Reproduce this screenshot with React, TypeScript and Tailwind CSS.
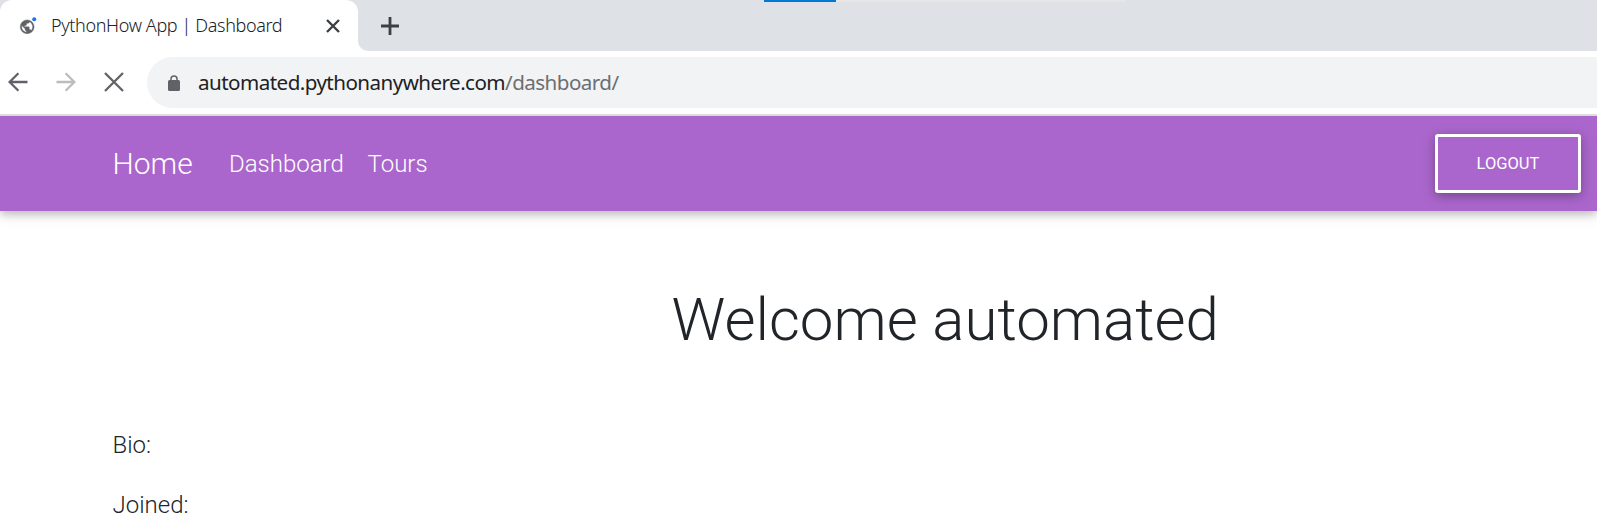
const Globe = () => (
  <svg width="20" height="20" viewBox="0 0 20 20" className="-mt-[2px] block">
    <path
      transform="translate(-0.1 3.5) scale(0.69)"
      fill="#5f6368"
      stroke="#5f6368"
      strokeWidth="0.6"
      d="M12 2C6.480 2 2 6.480 2 12s4.480 10 10 10 10-4.480 10-10S17.520 2 12 2zm-1 17.930c-3.950-.490-7-3.850-7-7.930 0-.620.080-1.210.210-1.790L9 15v1c0 1.100.900 2 2 2v1.930zm6.900-2.540c-.260-.810-1-1.390-1.900-1.390h-1v-3c0-.550-.450-1-1-1H8v-2h2c.550 0 1-.450 1-1V7h2c1.100 0 2-.900 2-2v-.410c2.930 1.190 5 4.060 5 7.410 0 2.080-.800 3.970-2.100 5.390z"
    />
    <circle cx="15.2" cy="4.2" r="2" fill="#1a73e8" />
  </svg>
);

const Cross = ({ size, width, color }: { size: number; width: number; color: string }) => (
  <svg width={size} height={size} viewBox={`0 0 ${size} ${size}`} className="block">
    <path d={`M1 1L${size - 1} ${size - 1}M${size - 1} 1L1 ${size - 1}`} stroke={color} strokeWidth={width} />
  </svg>
);

const Arrow = ({ forward = false }: { forward?: boolean }) => (
  <svg width="20" height="20" viewBox="0 0 20 20" className={forward ? "block rotate-180" : "block"}>
    <path d="M19.5 10H2M10.4 1.2L1.6 10l8.8 8.8" fill="none" stroke={forward ? "#babcbe" : "#5f6368"} strokeWidth="2.3" />
  </svg>
);

const Lock = () => (
  <svg width="12" height="16" viewBox="0 0 12 16" className="block">
    <path d="M3 6V4a3 3 0 0 1 6 0v2" fill="none" stroke="#5f6368" strokeWidth="1.5" />
    <rect y="5" width="12" height="11" rx="1.5" fill="#5f6368" />
  </svg>
);

function TabStrip() {
  return (
    <div className="relative flex h-[51px] bg-[#dee1e6]">
      <div className="absolute left-[764px] top-0 flex h-[2px] w-[362px] bg-[#e6e6e6]">
        <div className="w-[72px] bg-[#0078d7]" />
      </div>
      <div className="relative flex w-[358px] shrink-0 items-center rounded-t-[12px] bg-white pl-[19px]">
        <Globe />
        <span className="mb-[2px] ml-[12px] w-[275px] whitespace-nowrap text-[18px] font-light leading-6 tracking-[-0.36px] text-[#202124]">
          PythonHow App | Dashboard
        </span>
        <Cross size={14} width={2.4} color="#3c4043" />
        <svg width="10" height="10" className="absolute -right-[10px] bottom-0">
          <path d="M0 0A10 10 0 0 0 10 10H0Z" fill="#fff" />
        </svg>
      </div>
      <div className="flex items-center pl-[23px]">
        <svg width="18" height="18" viewBox="0 0 18 18">
          <path d="M9 0v18M0 9h18" stroke="#3c4043" strokeWidth="2.8" />
        </svg>
      </div>
    </div>
  );
}

function Toolbar() {
  return (
    <div className="relative z-10 flex h-[65px] items-start border-b-2 border-[#dadce0] bg-white pl-2 pt-[6px]">
      <div className="flex h-[50px] w-[139px] shrink-0 items-center">
        <Arrow />
        <div className="ml-[28px]"><Arrow forward /></div>
        <div className="ml-[28px]"><Cross size={20} width={2.3} color="#5f6368" /></div>
      </div>
      <div className="flex h-[51px] grow items-center rounded-l-full bg-[#f1f3f4] pl-[21px]">
        <div className="mt-px"><Lock /></div>
        <span className="mb-[2px] ml-[18px] whitespace-nowrap text-[20.6px] leading-7 tracking-[-0.55px] text-[#202124]">
          automated.pythonanywhere.com<span className="text-[#6b6f73]">/dashboard/</span>
        </span>
      </div>
    </div>
  );
}

export default function App() {
  return (
    <div className="h-[532px] w-full overflow-hidden bg-white font-['Noto_Sans',sans-serif]">
      <TabStrip />
      <Toolbar />
      <div className="font-[Roboto,sans-serif] font-light text-[#212529]">
        <nav className="flex h-[95px] items-center bg-[#aa66cc] pl-[112.5px] pr-4 text-white shadow-[0_3px_8px_rgba(0,0,0,0.2),0_3px_16px_rgba(0,0,0,0.12)]">
          <a className="w-[116.5px] text-[30px]">Home</a>
          <a className="w-[138.5px] text-[24px]">Dashboard</a>
          <a className="text-[24px]">Tours</a>
          <button className="ml-auto h-[59px] w-[146px] rounded-[3px] border-[3px] border-white pt-[2px] text-[16.5px] font-normal shadow-[0_3px_8px_rgba(0,0,0,0.2),0_3px_16px_rgba(0,0,0,0.12)]">
            LOGOUT
          </button>
        </nav>
        <main className="px-[112.5px] pt-[73px]">
          <h1 className="pl-[559px] text-[60px] leading-[72px]">Welcome automated</h1>
          <p className="mt-[71px] text-[24px] leading-9">Bio:</p>
          <p className="mt-6 text-[24px] leading-9">Joined:</p>
        </main>
      </div>
    </div>
  );
}
